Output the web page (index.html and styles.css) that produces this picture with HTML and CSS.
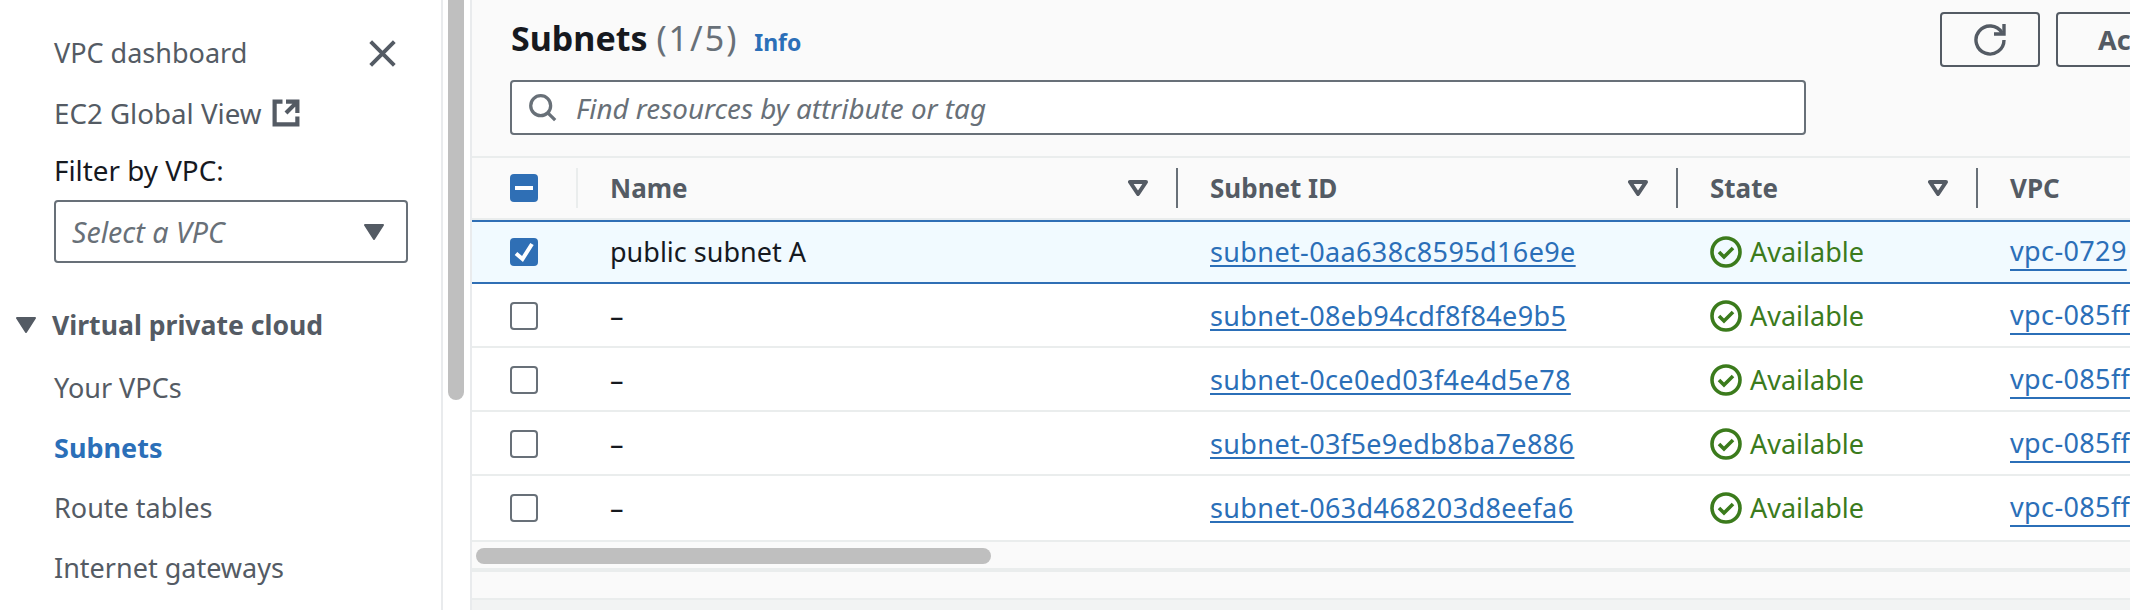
FILE: index.html
```html
<!DOCTYPE html>
<html lang="en">
<head>
<meta charset="utf-8">
<title>Subnets</title>
<link rel="stylesheet" href="styles.css">
</head>
<body>
<div class="page">
  <aside class="sidebar">
    <nav class="nav">
      <div class="nav-item nav-top">
        <span>VPC dashboard</span>
        <svg class="close" viewBox="0 0 16 16"><path d="m1 1 14 14M15 1 1 15"/></svg>
      </div>
      <div class="nav-item nav-wide">
        <span>EC2 Global View</span>
        <svg class="external" viewBox="0 0 16 16"><path d="M14.500 8V1.500H8M14.500 1.500 8 8M6 1.500H1.500v13h13V10"/></svg>
      </div>
      <div class="filter-label">Filter by VPC:</div>
      <div class="select">
        <span>Select a VPC</span>
        <svg class="caret" viewBox="0 0 20 16"><path d="M1 1h18l-9 14z"/></svg>
      </div>
      <div class="section">
        <svg class="caret" viewBox="0 0 20 16"><path d="M1 1h18l-9 14z"/></svg>
        <span>Virtual private cloud</span>
      </div>
      <div class="nav-item">Your VPCs</div>
      <div class="nav-item nav-active">Subnets</div>
      <div class="nav-item">Route tables</div>
      <div class="nav-item">Internet gateways</div>
    </nav>
    <div class="v-track"><div class="v-thumb"></div></div>
  </aside>
  <main class="main">
    <header class="toolbar">
      <h1 class="title">Subnets <span class="count">(1/5)</span> <a class="info">Info</a></h1>
      <div class="actions">
        <button class="btn btn-icon">
          <svg class="refresh" viewBox="0 0 16 16"><path d="M10 5h5V0"/><path d="M15 8a7 7 0 1 1-1-3.600"/></svg>
        </button>
        <button class="btn btn-text">Actions</button>
      </div>
    </header>
    <div class="search">
      <svg class="search-icon" viewBox="0 0 16 16"><circle cx="7" cy="7" r="5.500"/><path d="m15 15-4.200-4.200"/></svg>
      <span>Find resources by attribute or tag</span>
    </div>
    <div class="table">
      <div class="row head">
        <div class="cell check-head"><span class="box box-on"><svg viewBox="0 0 28 28"><path class="mark" d="M5 14h18"/></svg></span></div>
        <div class="cell th"><span>Name</span><svg class="sort" viewBox="0 0 20 16"><path d="M2 2h16l-8 12z"/></svg></div>
        <div class="cell th"><span>Subnet ID</span><svg class="sort" viewBox="0 0 20 16"><path d="M2 2h16l-8 12z"/></svg></div>
        <div class="cell th"><span>State</span><svg class="sort" viewBox="0 0 20 16"><path d="M2 2h16l-8 12z"/></svg></div>
        <div class="cell th th-last"><span>VPC</span></div>
      </div>
      <div class="row selected">
        <div class="cell cell-check"><span class="box box-on"><svg viewBox="0 0 28 28"><path class="mark" d="M6 15.500 12.500 21 22 6"/></svg></span></div>
        <div class="cell td">public subnet A</div>
        <div class="cell td"><a class="link">subnet-0aa638c8595d16e9e</a></div>
        <div class="cell td status"><svg class="ok" viewBox="0 0 16 16"><circle cx="8" cy="8" r="7"/><path d="m4.500 8 2.500 2.500 4.500-4.500"/></svg>Available</div>
        <div class="cell td td-vpc"><a class="link link-vpc">vpc-0729</a></div>
      </div>
      <div class="row row-plain">
        <div class="cell cell-check"><span class="box"></span></div>
        <div class="cell td">–</div>
        <div class="cell td"><a class="link">subnet-08eb94cdf8f84e9b5</a></div>
        <div class="cell td status"><svg class="ok" viewBox="0 0 16 16"><circle cx="8" cy="8" r="7"/><path d="m4.500 8 2.500 2.500 4.500-4.500"/></svg>Available</div>
        <div class="cell td td-vpc"><a class="link link-vpc">vpc-085ff</a></div>
      </div>
      <div class="row row-plain">
        <div class="cell cell-check"><span class="box"></span></div>
        <div class="cell td">–</div>
        <div class="cell td"><a class="link">subnet-0ce0ed03f4e4d5e78</a></div>
        <div class="cell td status"><svg class="ok" viewBox="0 0 16 16"><circle cx="8" cy="8" r="7"/><path d="m4.500 8 2.500 2.500 4.500-4.500"/></svg>Available</div>
        <div class="cell td td-vpc"><a class="link link-vpc">vpc-085ff</a></div>
      </div>
      <div class="row row-plain">
        <div class="cell cell-check"><span class="box"></span></div>
        <div class="cell td">–</div>
        <div class="cell td"><a class="link">subnet-03f5e9edb8ba7e886</a></div>
        <div class="cell td status"><svg class="ok" viewBox="0 0 16 16"><circle cx="8" cy="8" r="7"/><path d="m4.500 8 2.500 2.500 4.500-4.500"/></svg>Available</div>
        <div class="cell td td-vpc"><a class="link link-vpc">vpc-085ff</a></div>
      </div>
      <div class="row row-last">
        <div class="cell cell-check"><span class="box"></span></div>
        <div class="cell td">–</div>
        <div class="cell td"><a class="link">subnet-063d468203d8eefa6</a></div>
        <div class="cell td status"><svg class="ok" viewBox="0 0 16 16"><circle cx="8" cy="8" r="7"/><path d="m4.500 8 2.500 2.500 4.500-4.500"/></svg>Available</div>
        <div class="cell td td-vpc"><a class="link link-vpc">vpc-085ff</a></div>
      </div>
      <div class="h-track"><div class="h-thumb"></div></div>
    </div>
    <div class="spacer"></div>
    <div class="footer"></div>
  </main>
</div>
</body>
</html>
```

FILE: styles.css
```css
* { box-sizing: border-box; }
html, body { margin: 0; padding: 0; height: 100%; overflow: hidden; }
body { font-family: "Noto Sans", "Open Sans", sans-serif; font-size: 27px; color: #16191f; background: #fff; }
svg { display: block; flex: none; fill: none; }

.page { display: flex; width: 2130px; height: 610px; overflow: hidden; }

/* Sidebar */
.sidebar { flex: 0 0 470px; display: flex; height: 610px; background: #fff; }
.nav { flex: 0 0 443px; height: 610px; padding: 23px 32px 0 54px; border-right: 2px solid #e9ebed; color: #545b64; overflow: hidden; }
.nav-item { display: flex; align-items: center; height: 60px; line-height: 30px; white-space: nowrap; }
.nav-wide { font-size: 27.700px; }
.nav-top { justify-content: space-between; padding-right: 13px; }
.nav-item > svg.external { margin-left: 11px; }
.close { width: 27px; height: 27px; stroke: #545b64; stroke-width: 2.300; }
.external { width: 28px; height: 28px; stroke: #545b64; stroke-width: 2.400; }
.nav-active { color: #2b6fb8; font-weight: 700; }
.filter-label { height: 30px; line-height: 30px; margin-top: 12px; font-size: 27.800px; color: #16191f; }
.select { display: flex; align-items: center; justify-content: space-between; width: 354px; height: 63px; margin-top: 15px; padding: 0 22px 0 16px; border: 2px solid #687078; border-radius: 4px; background: #fff; color: #687078; font-size: 28.600px; font-style: italic; }
.caret { width: 20px; height: 16px; fill: #545b64; stroke: #545b64; stroke-width: 2; stroke-linejoin: round; }
.section { display: flex; align-items: center; gap: 16px; height: 60px; margin: 32px 0 3px -38px; font-size: 26.600px; font-weight: 700; color: #545b64; white-space: nowrap; }
.v-track { flex: 0 0 27px; padding-left: 5px; background: #fff; }
.v-thumb { width: 16px; height: 400px; background: #bfbfbf; border-radius: 0 0 8px 8px; }

/* Main */
.main { flex: 1; min-width: 0; display: flex; flex-direction: column; height: 610px; background: #fafafa; border-left: 2px solid #e9ebed; overflow: hidden; }
.toolbar { display: flex; justify-content: space-between; align-items: center; height: 55px; margin-top: 12px; padding-left: 39px; }
.title { margin: 0; font-size: 34px; line-height: 46px; font-weight: 700; color: #16191f; white-space: nowrap; }
.count { font-weight: 400; letter-spacing: 2px; color: #687078; }
.info { margin-left: 7px; font-size: 23px; font-weight: 700; color: #2b6fb8; }
.actions { display: flex; gap: 16px; flex: 0 0 190px; min-width: 0; }
.btn { height: 55px; background: transparent; border: 2px solid #545b64; border-radius: 4px; padding: 0; color: #545b64; font: 700 27px "Noto Sans", sans-serif; flex: none; }
.btn-icon { display: flex; align-items: center; justify-content: center; width: 100px; }
.btn-text { width: 160px; text-align: left; padding-left: 40px; }
.refresh { width: 32px; height: 32px; stroke: #545b64; stroke-width: 1.700; }
.search { display: flex; align-items: center; gap: 19px; width: 1296px; height: 55px; margin: 13px 0 21px 38px; padding-left: 16px; background: #fff; border: 2px solid #687078; border-radius: 4px; color: #687078; font-size: 27.800px; font-style: italic; white-space: nowrap; }
.search-icon { width: 29px; height: 29px; stroke: #687078; stroke-width: 1.800; }

/* Table */
.table { border-top: 2px solid #eaeded; }
.row { display: grid; grid-template-columns: 106px 600px 500px 300px 1fr; align-items: center; height: 64px; background: #fff; border-bottom: 2px solid #eaeded; }
.row-plain { padding-top: 2px; }
.head { height: 62px; background: #fafafa; }
.selected { margin-left: -2px; background: #f1faff; border: 2px solid #2f6fb5; border-right: 0; }
.row-last { height: 66px; }
.cell { min-width: 0; white-space: nowrap; }
.check-head { display: flex; align-items: center; height: 40px; padding-left: 38px; border-right: 2px solid #eaeded; }
.cell-check { padding-left: 38px; }
.box { display: block; width: 28px; height: 28px; border: 2px solid #687078; border-radius: 4px; background: #fff; }
.box-on { background: #2f6fb5; border: 0; }
.box svg { width: 28px; height: 28px; }
.mark { stroke: #fff; stroke-width: 4; }
.th { display: flex; align-items: center; justify-content: space-between; height: 40px; padding: 0 28px 0 32px; border-right: 2px solid #687078; font-size: 26px; font-weight: 700; color: #545b64; }
.th-last { border-right: 0; }
.sort { width: 20px; height: 16px; stroke: #545b64; stroke-width: 4; stroke-linejoin: round; }
.td { padding-left: 32px; padding-bottom: 2px; overflow: hidden; }
.link { color: #2b6fb8; text-decoration: underline; text-decoration-thickness: 2px; text-underline-offset: 3px; text-decoration-skip-ink: none; letter-spacing: 0.370px; }
.link-vpc { text-underline-offset: 8px; }
.td-vpc { line-height: 44px; }
.status { display: flex; align-items: center; gap: 8px; color: #3b7b1c; }
.ok { width: 32px; height: 32px; margin-top: 2px; stroke: #3b7b1c; stroke-width: 1.800; }
.h-track { height: 26px; padding: 6px 0 4px 4px; background: #fafafa; }
.h-thumb { width: 515px; height: 16px; background: #bfbfbf; border-radius: 8px; }
.spacer { height: 32px; flex: none; background: #fafafa; border-top: 4px solid #eaeded; border-bottom: 2px solid #eaeded; }
.footer { flex: 1; background: #f2f3f3; }
```
